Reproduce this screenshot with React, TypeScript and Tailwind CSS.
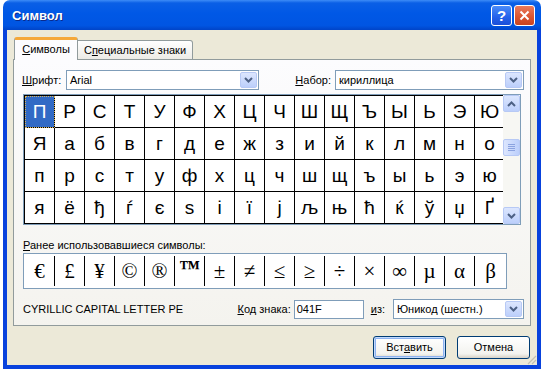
import React from "react";

const rows = [
    "ПРСТУФХЦЧШЩЪЫЬЭЮ",
    "Яабвгдежзийклмно",
    "прстуфхцчшщъыьэю",
    "яёђѓєѕіїјљњћќўџҐ",
];

const recent = ["€", "£", "¥", "©", "®", "™", "±", "≠", "≤", "≥", "÷", "×", "∞", "µ", "α", "β"];

function Chevron({ up = false }: { up?: boolean }) {
    return (
        <svg width="9" height="6" viewBox="0 0 9 6">
            <path
                d={up ? "M1 5 L4.5 1.5 L8 5" : "M1 1 L4.5 4.5 L8 1"}
                fill="none"
                stroke="#4d6185"
                strokeWidth="2"
            />
        </svg>
    );
}

function DropButton() {
    return (
        <div className="mr-px flex h-[16px] w-[17px] items-center justify-center rounded-[2px] border border-[#b7c9f5] bg-[linear-gradient(to_bottom,#dce6fe,#bccffb)]">
            <Chevron />
        </div>
    );
}

function Combo({ value, className }: { value: string; className: string }) {
    return (
        <div className={`flex h-[20px] items-center border border-[#7f9db9] bg-white pl-[3px] ${className}`}>
            <span className="flex-1">{value}</span>
            <DropButton />
        </div>
    );
}

function Scrollbar() {
    return (
        <div className="flex h-[129px] w-[17px] flex-col bg-[#f7f7f3]">
            <div className="flex h-[17px] items-center justify-center rounded-[2px] border border-[#b7c9f5] bg-[linear-gradient(to_bottom,#dce6fe,#bccffb)]">
                <Chevron up />
            </div>
            <div className="mt-[27px] flex h-[17px] flex-col items-center justify-center gap-[1px] rounded-[2px] border border-[#b7c9f5] bg-[linear-gradient(to_right,#dce6fe,#bccffb)]">
                <div className="h-px w-[7px] bg-[#8ba3e0]" />
                <div className="h-px w-[7px] bg-[#8ba3e0]" />
                <div className="h-px w-[7px] bg-[#8ba3e0]" />
                <div className="h-px w-[7px] bg-[#8ba3e0]" />
            </div>
            <div className="flex-1" />
            <div className="flex h-[17px] items-center justify-center rounded-[2px] border border-[#b7c9f5] bg-[linear-gradient(to_bottom,#dce6fe,#bccffb)]">
                <Chevron />
            </div>
        </div>
    );
}

export default function App() {
    return (
        <div className="flex h-[369px] w-[543px] bg-white pl-[3px] font-['Liberation_Sans',Arial,sans-serif] text-[11px] leading-[13px] text-black">
            <div className="flex h-full w-[538px] flex-col">
                {/* title bar */}
                <div className="flex h-[30px] shrink-0 items-center rounded-t-[7px] bg-[linear-gradient(to_bottom,#3d8cf7_0%,#0a5fe6_10%,#0058e6_45%,#0055e2_85%,#0044c8_100%)] pl-[9px] pr-[6px]">
                    <span className="text-[13px] font-bold text-white [text-shadow:1px_1px_0_#0a2a8c]">
                        Символ
                    </span>
                    <div className="ml-auto flex gap-[2px]">
                        <div className="flex h-[21px] w-[21px] items-center justify-center rounded-[3px] border border-white bg-[linear-gradient(to_bottom,#4a8cf9,#2360ea_60%,#1b4fd8)] text-[15px] font-bold text-white">
                            ?
                        </div>
                        <div className="flex h-[21px] w-[21px] items-center justify-center rounded-[3px] border border-white bg-[linear-gradient(to_bottom,#ea7a5c,#d9532f_60%,#c9431f)]">
                            <svg width="11" height="11" viewBox="0 0 11 11">
                                <path d="M1.5 1.5 L9.5 9.5 M9.5 1.5 L1.5 9.5" stroke="white" strokeWidth="2" />
                            </svg>
                        </div>
                    </div>
                </div>

                {/* body */}
                <div className="relative flex flex-1 flex-col border-x-4 border-b-4 border-[#0842dd] bg-[#ece9d8] pt-[7px]">
                    <div className="mx-[6px] flex flex-col">
                        {/* tabs */}
                        <div className="relative z-10 -mb-px flex h-[23px] items-end pl-[1px]">
                            <div className="flex h-[23px] w-[64px] items-center justify-center rounded-t-[3px] border-x border-t-[3px] border-x-[#919b9c] border-t-[#f5a83a] bg-[#fcfcfe] pb-[2px]">
                                <span>
                                    <span className="underline">С</span>имволы
                                </span>
                            </div>
                            <div className="flex h-[20px] w-[115px] items-center justify-center rounded-tr-[3px] border-y border-r border-[#919b9c] bg-[linear-gradient(to_bottom,#ffffff,#ecebe6)]">
                                <span>
                                    С<span className="underline">п</span>ециальные знаки
                                </span>
                            </div>
                        </div>

                        {/* panel */}
                        <div className="flex h-[267px] flex-col border border-[#919b9c] bg-[linear-gradient(to_bottom,#fcfcfe,#f4f3ee)] pl-[9px] pr-[6px] pt-[10px]">
                            <div className="flex h-[20px] items-center">
                                <span className="-ml-px w-[44px]">
                                    <span className="underline">Ш</span>рифт:
                                </span>
                                <Combo value="Arial" className="w-[193px]" />
                                <span className="ml-auto mr-[4px]">
                                    <span className="underline">Н</span>абор:
                                </span>
                                <Combo value="кириллица" className="w-[189px]" />
                            </div>

                            {/* character grid */}
                            <div className="mt-[4px] flex w-[498px] border border-[#7f9db9] bg-white">
                                <div className="h-[129px] w-[479px] overflow-hidden">
                                    <div className="grid w-[481px] grid-cols-[repeat(16,30px)] border-l border-t border-black">
                                        {rows.flatMap((row, r) =>
                                            Array.from(row).map((ch, c) => {
                                                const sel = r === 0 && c === 0;
                                                return (
                                                    <div
                                                        key={`${r}-${c}`}
                                                        className={`flex h-[32px] items-center justify-center border-b border-r border-black text-[19px] leading-none ${
                                                            sel
                                                                ? "bg-[#316ac5] text-white outline-1 -outline-offset-1 outline-dotted outline-[#d9b45a]"
                                                                : ""
                                                        }`}
                                                    >
                                                        {ch}
                                                    </div>
                                                );
                                            })
                                        )}
                                    </div>
                                </div>
                                <Scrollbar />
                            </div>

                            <div className="mt-[14px] h-[13px]">
                                <span className="underline">Р</span>анее использовавшиеся символы:
                            </div>

                            <div className="mt-px flex h-[36px] w-[484px] items-center border border-[#7f9db9] bg-white pl-px font-['Liberation_Serif','Times_New_Roman',serif] text-[21px] leading-none">
                                {recent.map((s, i) => (
                                    <React.Fragment key={i}>
                                        <div
                                            className={`flex h-[30px] items-center justify-center ${
                                                i === recent.length - 1 ? "flex-1" : "w-[29px]"
                                            } ${s === "™" ? "items-start pt-[2px] font-bold" : ""}`}
                                        >
                                            {s}
                                        </div>
                                        {i < recent.length - 1 && <div className="h-[30px] w-px bg-black" />}
                                    </React.Fragment>
                                ))}
                            </div>

                            <div className="mt-[10px] flex h-[20px] items-center">
                                <span>CYRILLIC CAPITAL LETTER PE</span>
                                <span className="ml-auto">
                                    <span className="underline">К</span>од знака:
                                </span>
                                <div className="ml-[3px] flex h-[19px] w-[70px] items-center border border-[#7f9db9] bg-white pl-[2px]">
                                    041F
                                </div>
                                <span className="ml-[7px]">
                                    <span className="underline">и</span>з:
                                </span>
                                <Combo value="Юникод (шестн.)" className="ml-[8px] w-[131px]" />
                            </div>
                        </div>
                    </div>

                    {/* buttons */}
                    <div className="mt-[10px] flex justify-end gap-[11px] pr-[7px]">
                        <div className="flex h-[23px] w-[73px] items-center justify-center rounded-[3px] border border-[#003c74] bg-[linear-gradient(to_bottom,#ffffff,#f3f3ef_80%,#d8d2c6)] shadow-[inset_0_0_0_1px_#c3dafd,inset_0_0_0_2px_#8db2ef]">
                            <span>
                                Вст<span className="underline">а</span>вить
                            </span>
                        </div>
                        <div className="flex h-[23px] w-[73px] items-center justify-center rounded-[3px] border border-[#003c74] bg-[linear-gradient(to_bottom,#ffffff,#f3f3ef_80%,#d8d2c6)]">
                            Отмена
                        </div>
                    </div>

                    {/* size grip */}
                    <svg className="absolute bottom-0 right-0" width="12" height="12" viewBox="0 0 12 12">
                        <path d="M11 3 L3 11 M11 7 L7 11 M11 11 L11 11" stroke="#c2bfb1" strokeWidth="1.2" />
                    </svg>
                </div>
            </div>
        </div>
    );
}
